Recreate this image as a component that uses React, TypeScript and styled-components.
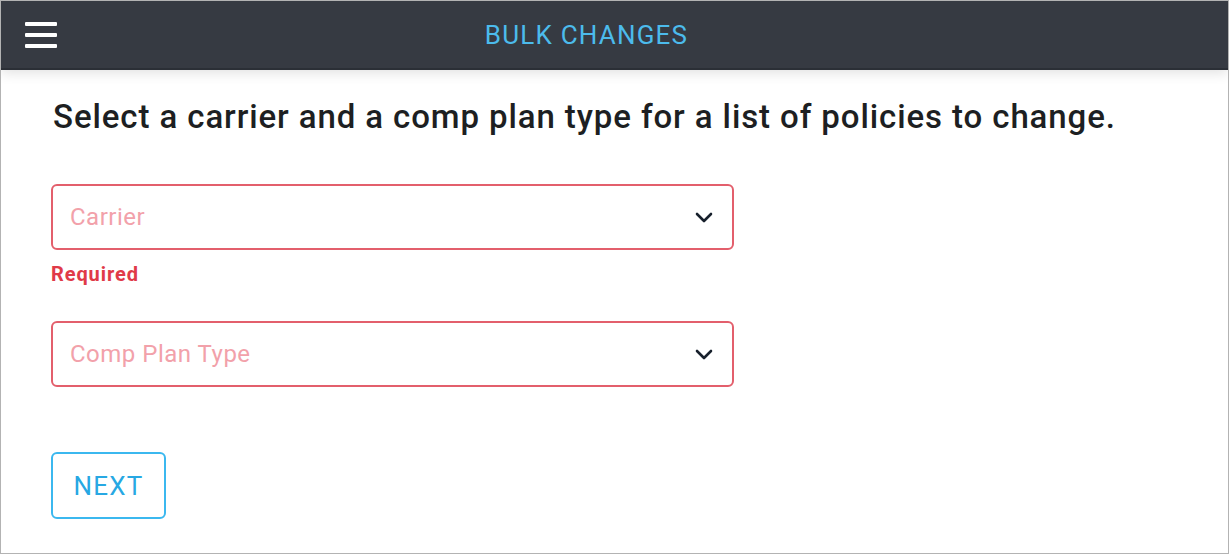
import React from "react";
import styled, { createGlobalStyle } from "styled-components";

const GlobalStyle = createGlobalStyle`
  html, body {
    margin: 0;
    padding: 0;
    background: #ffffff;
    font-family: Roboto, "Liberation Sans", Arial, sans-serif;
  }
  * { box-sizing: border-box; }
`;

const Frame = styled.div`
  width: 1229px;
  height: 554px;
  border: 1px solid #b3b3b3;
  background: #ffffff;
  overflow: hidden;
  display: flex;
  flex-direction: column;
`;

const Header = styled.header`
  height: 69px;
  flex: none;
  background: #363a42;
  border-bottom: 2px solid #2b2f36;
  box-shadow: 0 3px 12px rgba(0, 0, 0, 0.12);
  display: flex;
  align-items: center;
  padding-left: 24px;
  position: relative;
  z-index: 1;
`;

const MenuButton = styled.button`
  width: 32px;
  height: 26px;
  padding: 0;
  border: none;
  background: transparent;
  display: flex;
  flex-direction: column;
  justify-content: space-between;
  cursor: pointer;
`;

const MenuBar = styled.span`
  display: block;
  width: 32px;
  height: 4px;
  border-radius: 1px;
  background: #ffffff;
`;

const Title = styled.h1`
  flex: 1;
  margin: 0;
  padding-right: 112px;
  text-align: center;
  font-family: Roboto, "Liberation Sans", Arial, sans-serif;
  font-weight: 400;
  font-size: 26px;
  letter-spacing: 1.2px;
  color: #4cbbec;
`;

const Content = styled.main`
  flex: 1;
  padding: 28px 0 0 50px;
`;

const Heading = styled.h2`
  margin: 0 0 48px 2px;
  font-family: Roboto, "Liberation Sans", Arial, sans-serif;
  font-weight: 500;
  font-size: 33px;
  letter-spacing: 0.9px;
  line-height: 38px;
  color: #1d1f22;
`;

const Field = styled.div<{ $gap: number }>`
  margin-bottom: ${(p) => p.$gap}px;
`;

const SelectBox = styled.div`
  width: 683px;
  height: 66px;
  border: 2px solid #e35f6c;
  border-radius: 6px;
  display: flex;
  align-items: center;
  justify-content: space-between;
  padding: 0 19px 0 17px;
`;

const Placeholder = styled.span`
  font-family: Roboto, "Liberation Sans", Arial, sans-serif;
  font-size: 24px;
  letter-spacing: 0.5px;
  color: #f2a1aa;
`;

const ErrorText = styled.div`
  margin-top: 12px;
  font-family: Roboto, "Liberation Sans", Arial, sans-serif;
  font-weight: 700;
  font-size: 20px;
  letter-spacing: 0.9px;
  line-height: 24px;
  color: #e03a48;
`;

const NextButton = styled.button`
  width: 115px;
  height: 67px;
  border: 2px solid #3bb8ef;
  border-radius: 6px;
  background: #ffffff;
  font-family: Roboto, "Liberation Sans", Arial, sans-serif;
  font-size: 26px;
  letter-spacing: 1.2px;
  color: #27a8e3;
  padding: 0;
  cursor: pointer;
`;

const Chevron = () => (
  <svg width="18" height="11" viewBox="0 0 18 11" fill="none">
    <path
      d="M2 2 L9 9 L16 2"
      stroke="#17202c"
      strokeWidth="2.6"
      strokeLinecap="round"
      strokeLinejoin="round"
    />
  </svg>
);

const Select = ({ placeholder }: { placeholder: string }) => (
  <SelectBox>
    <Placeholder>{placeholder}</Placeholder>
    <Chevron />
  </SelectBox>
);

export default function App() {
  return (
    <>
      <GlobalStyle />
      <Frame>
        <Header>
          <MenuButton aria-label="menu">
            <MenuBar />
            <MenuBar />
            <MenuBar />
          </MenuButton>
          <Title>BULK CHANGES</Title>
        </Header>
        <Content>
          <Heading>
            Select a carrier and a comp plan type for a list of policies to change.
          </Heading>
          <Field $gap={35}>
            <Select placeholder="Carrier" />
            <ErrorText>Required</ErrorText>
          </Field>
          <Field $gap={65}>
            <Select placeholder="Comp Plan Type" />
          </Field>
          <NextButton>NEXT</NextButton>
        </Content>
      </Frame>
    </>
  );
}
